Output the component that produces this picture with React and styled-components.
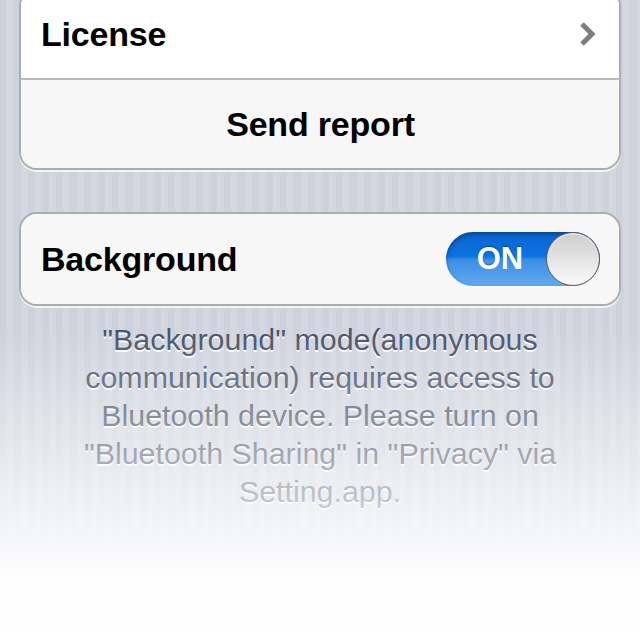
import React from 'react';
import styled, { createGlobalStyle } from 'styled-components';

const GlobalStyle = createGlobalStyle`
  html, body {
    margin: 0;
    padding: 0;
  }
  body {
    font-family: "Liberation Sans", Arial, sans-serif;
  }
`;

const Page = styled.div`
  position: relative;
  width: 640px;
  height: 640px;
  overflow: hidden;
  box-sizing: border-box;
  padding: 0 19px;
  background: repeating-linear-gradient(
    to right,
    #cdd2dc 0px,
    #cdd2dc 7px,
    #d3d7e0 7px,
    #d3d7e0 14px
  );

  &::after {
    content: '';
    position: absolute;
    inset: 0;
    pointer-events: none;
    background: linear-gradient(
      to bottom,
      rgba(255, 255, 255, 0) 0px,
      rgba(255, 255, 255, 0) 330px,
      rgba(255, 255, 255, 0.55) 470px,
      rgba(255, 255, 255, 0.97) 580px,
      #ffffff 640px
    );
  }
`;

const Group = styled.div`
  margin-top: ${(p) => p.$top || 0}px;
  border: 2px solid #acadb0;
  border-radius: 18px;
  overflow: hidden;
  background: #f7f7f7;
  box-shadow: 0 2px 0 rgba(255, 255, 255, 0.7);
`;

const Row = styled.div`
  display: flex;
  align-items: center;
  justify-content: ${(p) => (p.$center ? 'center' : 'space-between')};
  height: ${(p) => p.$height || 90}px;
  padding: 0 19px 0 20px;
  background: ${(p) => (p.$white ? '#ffffff' : '#f7f7f7')};
  border-bottom: ${(p) => (p.$divider ? '2px solid #b9b9bb' : 'none')};
`;

const Label = styled.span`
  font-size: 34px;
  font-weight: bold;
  color: #000;
  letter-spacing: -0.2px;
`;

const Chevron = styled.svg`
  width: 20px;
  height: 26px;
  margin-right: 2px;
`;

const Switch = styled.div`
  position: relative;
  width: 154px;
  height: 54px;
  box-sizing: border-box;
  border-radius: 27px;
  background: linear-gradient(to bottom, #0a62cf 0%, #0b74e0 45%, #3d8fe6 52%, #62a9ef 100%);
  box-shadow: inset 0 2px 4px rgba(0, 0, 0, 0.35), 0 1px 0 rgba(255, 255, 255, 0.8);
  display: flex;
  align-items: center;
`;

const SwitchText = styled.span`
  width: 108px;
  text-align: center;
  font-size: 31px;
  font-weight: bold;
  color: #ffffff;
  text-shadow: 0 -1px 1px rgba(0, 0, 0, 0.35);
`;

const Knob = styled.div`
  position: absolute;
  right: 0;
  top: 0;
  width: 54px;
  height: 54px;
  box-sizing: border-box;
  border-radius: 50%;
  border: 1px solid #5f5f5f;
  background: linear-gradient(to bottom, #cdcdcd 0%, #e4e4e4 50%, #fafafa 100%);
  box-shadow: inset 0 1px 1px rgba(255, 255, 255, 0.9);
`;

const Gap = styled.div`
  height: 42px;
`;

const Note = styled.p`
  margin: 14px 0 0;
  padding: 0 36px;
  text-align: center;
  font-size: 30.4px;
  line-height: 38px;
  color: #4a5469;
  text-shadow: 0 2px 0 rgba(255, 255, 255, 0.9);
`;

export default function App() {
  return (
    <>
      <GlobalStyle />
      <Page>
        <Group $top={-12}>
          <Row $white $divider $height={88}>
            <Label>License</Label>
            <Chevron viewBox="0 0 20 26">
              <path d="M4 3 L14 13 L4 23" fill="none" stroke="#7d7d7d" strokeWidth="5" />
            </Chevron>
          </Row>
          <Row $center $height={88}>
            <Label>Send report</Label>
          </Row>
        </Group>
        <Gap />
        <Group>
          <Row $height={90}>
            <Label>Background</Label>
            <Switch>
              <SwitchText>ON</SwitchText>
              <Knob />
            </Switch>
          </Row>
        </Group>
        <Note>
          "Background" mode(anonymous communication) requires access to Bluetooth device. Please turn on
          "Bluetooth Sharing" in "Privacy" via Setting.app.
        </Note>
      </Page>
    </>
  );
}
